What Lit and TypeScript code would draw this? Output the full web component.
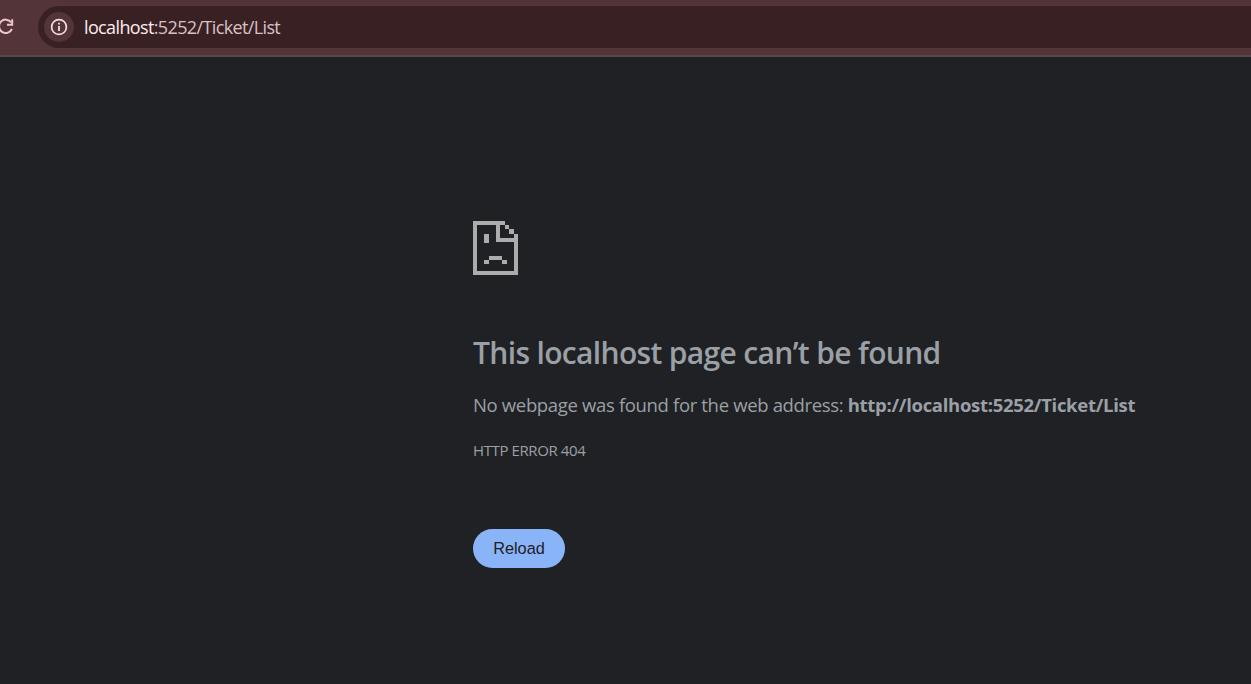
import { LitElement, html, css } from "lit";
import { customElement } from "lit/decorators.js";

@customElement("browser-bar")
class BrowserBar extends LitElement {
  static styles = css`
    :host { display: block; font-family: "Open Sans", "Noto Sans", sans-serif; }
    .bar { box-sizing: border-box; height: 57px; background: #523439; border-bottom: 2px solid #574748; padding-top: 6px; display: flex; overflow: hidden; }
    .reload { flex: none; width: 18px; height: 42px; margin-right: 20px; }
    .address { flex: 1; height: 42px; box-sizing: border-box; background: #392023; border-radius: 21px 0 0 21px; display: flex; align-items: center; padding-left: 6px; }
    .info { width: 30px; height: 30px; border-radius: 50%; background: #523439; margin-right: 10px; flex: none; }
    .info svg { display: block; }
    .url { font-size: 18px; line-height: 42px; letter-spacing: -0.63px; color: #d9c1c3; white-space: nowrap; }
    .host { color: #fbeeee; }
  `;
  render() {
    return html`<div class="bar">
      <svg class="reload" viewBox="0 6 18 42" fill="none" stroke="#f0c4ca" stroke-width="2">
        <path d="M11.2 22.4A6.7 6.7 0 1 0 11.9 29"/><path d="M12.2 19.2v5.6H7"/>
      </svg>
      <div class="address">
        <div class="info"><svg width="30" height="30" viewBox="0 0 30 30">
          <circle cx="15" cy="15" r="7.4" fill="none" stroke="#f4dfe0" stroke-width="1.7"/>
          <path d="M14.1 14h1.8v5h-1.8zM14.1 10.8h1.8v1.8h-1.8z" fill="#f4dfe0"/>
        </svg></div>
        <div class="url"><span class="host">localhost</span>:5252/Ticket/List</div>
      </div>
    </div>`;
  }
}

@customElement("app-root")
class AppRoot extends LitElement {
  static styles = css`
    :host { display: block; height: 684px; background: #202124; overflow: hidden; font-family: "Open Sans", "Noto Sans", sans-serif; color: #9aa0a6; }
    .content { margin-left: 473px; padding-top: 164px; }
    .icon { display: block; }
    h1 { margin: 58px 0 0; font-size: 30px; font-weight: 600; line-height: 40px; white-space: nowrap; letter-spacing: -0.66px; }
    p { margin: 19px 0 0; font-size: 18.5px; line-height: 26px; white-space: nowrap; letter-spacing: -0.34px; }
    .strong { font-weight: 700; letter-spacing: -0.3px; }
    .code { margin-top: 22px; font-size: 15px; line-height: 20px; letter-spacing: -0.4px; }
    button { display: block; margin-top: 69px; width: 92px; height: 39px; border: 0; border-radius: 20px; padding: 0; background: #8ab4f8; color: #202124; font: 16.3px "Liberation Sans", sans-serif; }
  `;
  render() {
    return html`<browser-bar></browser-bar>
      <div class="content">
        <svg class="icon" width="45" height="54" viewBox="0 0 45 54" fill="#acacac" shape-rendering="crispEdges">
          <path d="M0 0H32V4H27V17H45V54H0ZM4 4V50H41V21H23V4Z" fill-rule="evenodd"/>
          <path d="M32 4h4v4h-4zM36 8h5v5h-5zM41 13h4v4h-4zM11 13h5v9h-5zM16 35h13v4H16zM11 39h5v4h-5zM29 39h5v4h-5z"/>
        </svg>
        <h1>This localhost page can’t be found</h1>
        <p><span class="lead">No webpage was found for the web address: </span><span class="strong">http://localhost:5252/Ticket/List</span></p>
        <div class="code">HTTP ERROR 404</div>
        <button>Reload</button>
      </div>`;
  }
}
